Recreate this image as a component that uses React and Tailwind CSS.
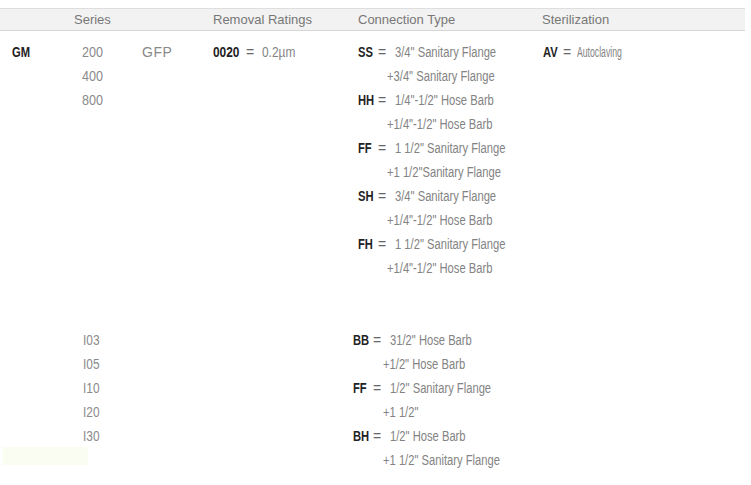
const groupOne = {
    code: 'GM',
    series: ['200', '400', '800'],
    type: 'GFP',
    rating: { code: '0020', value: '0.2µm' },
    connections: [
        { code: 'SS', main: '3/4" Sanitary Flange', plus: '+3/4" Sanitary Flange' },
        { code: 'HH', main: '1/4"-1/2" Hose Barb', plus: '+1/4"-1/2" Hose Barb' },
        { code: 'FF', main: '1 1/2" Sanitary Flange', plus: '+1 1/2"Sanitary Flange' },
        { code: 'SH', main: '3/4" Sanitary Flange', plus: '+1/4"-1/2" Hose Barb' },
        { code: 'FH', main: '1 1/2" Sanitary Flange', plus: '+1/4"-1/2" Hose Barb' },
    ],
    sterilization: { code: 'AV', value: 'Autoclaving' },
};

const groupTwo = {
    series: ['I03', 'I05', 'I10', 'I20', 'I30'],
    connections: [
        { code: 'BB', main: '31/2" Hose Barb', plus: '+1/2" Hose Barb' },
        { code: 'FF', main: '1/2" Sanitary Flange', plus: '+1 1/2"' },
        { code: 'BH', main: '1/2" Hose Barb', plus: '+1 1/2" Sanitary Flange' },
    ],
};

// condensed look: no narrow face installed, so squeeze Liberation Sans
const Code = ({ children }) => (
    <span className="inline-block origin-left scale-x-[0.8] font-bold text-[#222] text-[14px] whitespace-nowrap">{children}</span>
);

const Light = ({ children }) => (
    <span className="inline-block origin-left scale-x-[0.8] text-[#838383] text-[14px] whitespace-nowrap">{children}</span>
);

const Connection = ({ item, indent }) => (
    <>
        <div className="h-6 flex items-center">
            <span className="w-[20px]"><Code>{item.code}</Code></span>
            <span className="text-[#666] text-[14px] w-[17px]">=</span>
            <Light>{item.main}</Light>
        </div>
        <div className={`h-6 flex items-center ${indent}`}>
            <Light>{item.plus}</Light>
        </div>
    </>
);

export default function App() {
    return (
        <div className="w-[751px] h-[485px] bg-white pt-2 overflow-hidden" style={{ fontFamily: '"Liberation Sans", Arial, sans-serif' }}>

            {/* table header */}
            <div className="w-[745px] h-[23px] bg-[#f2f2f2] border-t border-b border-t-[#dedede] border-b-[#d6d6d6] flex items-center text-[13px] text-[#777]">
                <div className="w-[74px]" />
                <div className="w-[139px]">Series</div>
                <div className="w-[145px]">Removal Ratings</div>
                <div className="w-[184px]">Connection Type</div>
                <div>Sterilization</div>
            </div>

            {/* GM group */}
            <div className="flex mt-[9px]">
                <div className="w-[82px] pl-3 h-6 flex items-center"><Code>{groupOne.code}</Code></div>
                <div className="w-[60px]">
                    {groupOne.series.map((s) => (
                        <div key={s} className="h-6 flex items-center">
                            <span className="inline-block origin-left scale-x-[0.9] text-[#8a8a8a] text-[14px]">{s}</span>
                        </div>
                    ))}
                </div>
                <div className="w-[71px] h-6 flex items-center text-[14px] text-[#888] tracking-[0.5px]">{groupOne.type}</div>
                <div className="w-[145px] h-6 flex items-center">
                    <span className="w-[33px]">
                        <span className="inline-block origin-left scale-x-[0.85] font-bold text-[#222] text-[14px]">{groupOne.rating.code}</span>
                    </span>
                    <span className="text-[#666] text-[14px] w-[16px]">=</span>
                    <span className="inline-block origin-left scale-x-[0.85] text-[#838383] text-[14px]">{groupOne.rating.value}</span>
                </div>
                <div className="w-[185px]">
                    {groupOne.connections.map((c) => (
                        <Connection key={c.code} item={c} indent="pl-[29px]" />
                    ))}
                </div>
                <div className="h-6 flex items-center">
                    <span className="w-[20px]"><Code>{groupOne.sterilization.code}</Code></span>
                    <span className="text-[#666] text-[14px] w-[14px]">=</span>
                    <span className="inline-block origin-left scale-x-[0.62] text-[#838383] text-[14px] whitespace-nowrap">{groupOne.sterilization.value}</span>
                </div>
            </div>

            {/* I series group */}
            <div className="flex mt-[48px]">
                <div className="w-[83px]" />
                <div className="w-[270px]">
                    {groupTwo.series.map((s) => (
                        <div key={s} className="h-6 flex items-center">
                            <span className="inline-block origin-left scale-x-[0.85] text-[#8a8a8a] text-[14px]">{s}</span>
                        </div>
                    ))}
                    <div className="-ml-[80px] -mt-px w-[85px] h-[18px] bg-[#fafdf1]" />
                </div>
                <div className="w-[185px]">
                    {groupTwo.connections.map((c) => (
                        <Connection key={c.code} item={c} indent="pl-[30px]" />
                    ))}
                </div>
            </div>
        </div>
    );
}
